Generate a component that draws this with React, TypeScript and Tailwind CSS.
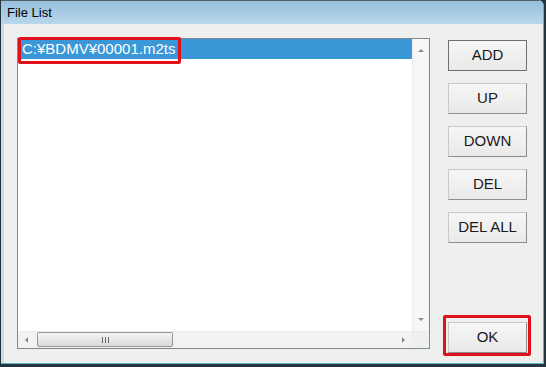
import React from "react";

const buttons = ["ADD", "UP", "DOWN", "DEL", "DEL ALL"];

const WinButton: React.FC<{ label: string; isDefault?: boolean; marked?: boolean }> = ({ label, isDefault, marked }) => (
  <div className="relative">
    <button
      className={
        "w-[79px] h-[31px] flex items-center justify-center text-[15px] text-[#1a1a1a] bg-gradient-to-b from-[#f6f6f6] to-[#e9e9e9] border " +
        (isDefault
          ? "border-[#6f6f6f]"
          : "border-t-[#c9c9c9] border-l-[#c9c9c9] border-r-[#8d8d8d] border-b-[#8d8d8d]")
      }
    >
      {label}
    </button>
    {marked && (
      <span className="absolute left-[-5px] top-[-7px] w-[88px] h-[41px] border-[3px] border-[#e0101c] rounded-[2px] pointer-events-none" />
    )}
  </div>
);

const Arrow: React.FC<{ dir: "up" | "down" | "left" | "right" }> = ({ dir }) => {
  const pts = {
    up: "1,4 4,1 7,4",
    down: "1,1 4,4 7,1",
    left: "4,1 1,4 4,7",
    right: "1,1 4,4 1,7",
  }[dir];
  const size = dir === "up" || dir === "down" ? { w: 8, h: 5 } : { w: 5, h: 8 };
  return (
    <svg width={size.w} height={size.h} viewBox={`0 0 ${size.w} ${size.h}`}>
      <polygon points={pts} fill="#8a8a8a" />
    </svg>
  );
};

export default function App() {
  return (
    <div className="w-[546px] h-[367px] bg-[#26353c] pl-[1px] font-['Liberation_Sans',Arial,sans-serif]">
      <div className="w-[543px] h-[364px] flex flex-col bg-[#eef0ee] border-r border-b border-[#5ab2c9] rounded-tr-[6px] overflow-hidden">
        <div className="h-[24px] shrink-0 bg-gradient-to-b from-[#98bfdb] to-[#b8d7ec] border-t border-[#4d616c] flex items-center pl-[6px] text-[13px] text-black">
          File List
        </div>
        <div className="flex-1 flex border-l-[3px] border-[#c8dbe8] pl-[13px] pt-[14px]">
          {/* list box */}
          <div className="relative w-[413px] h-[311px] border border-[#828790] bg-white flex flex-col">
            <div className="flex-1 flex">
              <div className="flex-1">
                <div className="h-[20px] bg-[#3a98d8] text-white text-[15px] leading-[20px] pl-[4px]">
                  C:¥BDMV¥00001.m2ts
                </div>
              </div>
              <div className="w-[17px] flex flex-col items-center justify-between bg-[#f7f7f7] border-l border-[#ececec] py-[9px]">
                <Arrow dir="up" />
                <Arrow dir="down" />
              </div>
            </div>
            <div className="h-[17px] flex bg-[#f2f2f2] border-t border-[#ececec]">
              <div className="w-[17px] flex items-center justify-center">
                <Arrow dir="left" />
              </div>
              <div className="w-[136px] h-[15px] ml-[2px] rounded-[2px] border border-[#979797] bg-gradient-to-b from-[#f4f4f4] to-[#d9d9d9] flex items-center justify-center gap-[2px]">
                <span className="w-[1px] h-[6px] bg-[#6b6b6b]" />
                <span className="w-[1px] h-[6px] bg-[#6b6b6b]" />
                <span className="w-[1px] h-[6px] bg-[#6b6b6b]" />
              </div>
              <div className="flex-1" />
              <div className="w-[17px] flex items-center justify-center">
                <Arrow dir="right" />
              </div>
              <div className="w-[17px] bg-[#eef0ee]" />
            </div>
            <span className="absolute left-0 top-[-2px] w-[163px] h-[27px] border-[3px] border-[#e0101c] rounded-[2px] pointer-events-none" />
          </div>
          {/* buttons */}
          <div className="ml-[18px] pt-[2px] pb-[10px] flex flex-col gap-[12px]">
            {buttons.map((b, i) => (
              <WinButton key={b} label={b} isDefault={i === 0} />
            ))}
            <div className="mt-auto">
              <WinButton label="OK" marked />
            </div>
          </div>
        </div>
      </div>
    </div>
  );
}
